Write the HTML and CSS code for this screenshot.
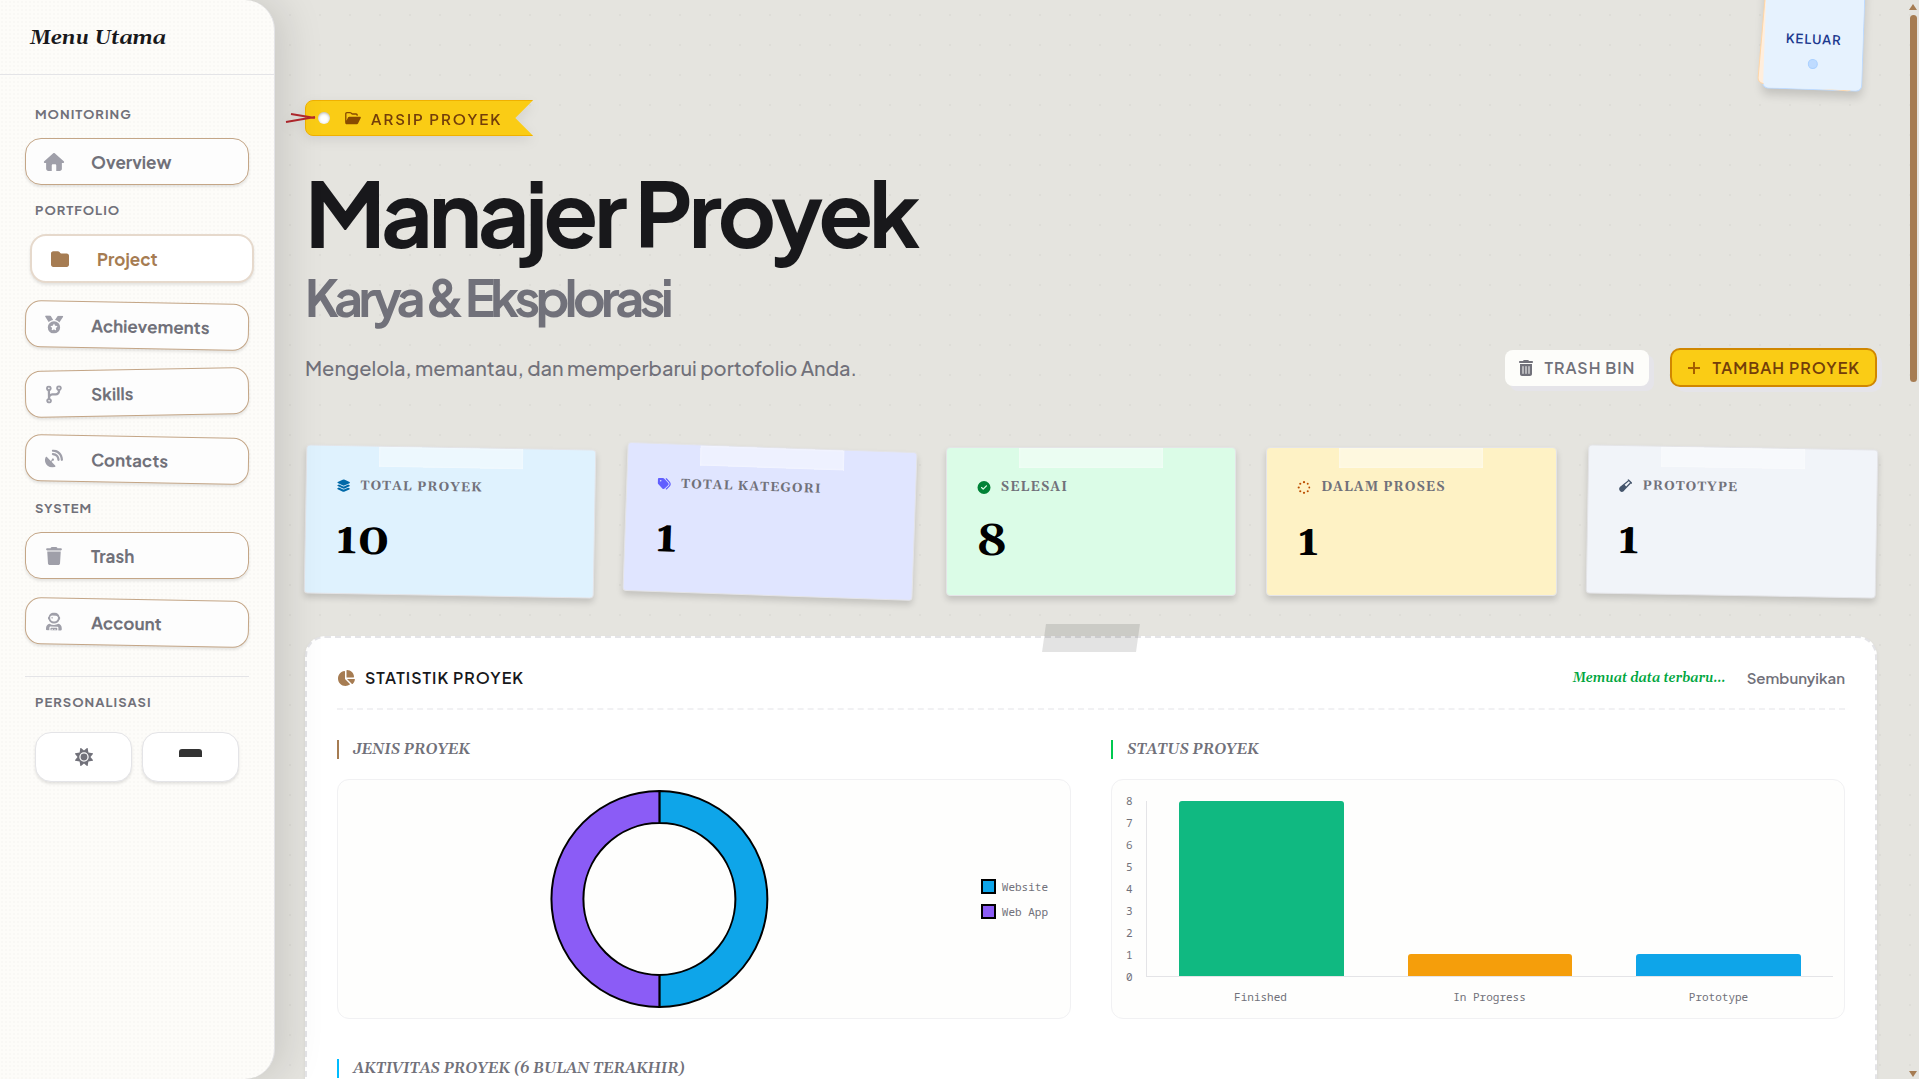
FILE: index.html
```html
<!DOCTYPE html>
<html lang="id">
<head>
    <meta charset="UTF-8">
    <meta name="viewport" content="width=device-width, initial-scale=1.0">
    <title>Manajer Proyek</title>
    <link rel="stylesheet" href="styles.css">
</head>
<body>
    <aside class="sidebar">
        <div class="sidebar-header">Menu Utama</div>
        <nav class="sidebar-nav">
            <p class="nav-label">Monitoring</p>
            <a href="#" class="nav-item">
                <svg class="nav-icon" viewBox="0 0 576 512"><path d="M575.8 255.5c0 18-15 32.1-32 32.1h-32l.7 160.2c0 35.3-28.7 64.2-64 64.2H352V352c0-17.7-14.3-32-32-32H256c-17.7 0-32 14.3-32 32V512H128c-35.3 0-64-28.7-64-64V287.6H32c-18 0-32-14-32-32.1c0-9 3-17 10-24L266.4 8c7-7 15-8 22-8s15 2 21 7L564.8 231.5c8 7 12 15 11 24z"/></svg>
                <span>Overview</span>
            </a>

            <p class="nav-label">Portfolio</p>
            <a href="#" class="nav-item active">
                <svg class="nav-icon" viewBox="0 0 512 512"><path d="M64 480H448c35.3 0 64-28.7 64-64V160c0-35.3-28.7-64-64-64H288c-10.1 0-19.6-4.7-25.6-12.8L243.2 57.6C231.1 41.5 212.1 32 192 32H64C28.7 32 0 60.7 0 96V416c0 35.3 28.7 64 64 64z"/></svg>
                <span>Project</span>
            </a>
            <a href="#" class="nav-item tilt-right">
                <svg class="nav-icon" viewBox="0 0 512 512"><path fill-rule="evenodd" d="M4.1 38.2C1.4 34.2 0 29.4 0 24.6C0 11 11 0 24.6 0H133.9c11.2 0 21.7 5.9 27.4 15.5l68.5 114.1c-48.2 6.1-91.3 28.6-123.4 61.9L4.1 38.2zm503.7 0L405.6 191.5c-32.1-33.3-75.2-55.8-123.4-61.9L350.7 15.5C356.5 5.9 366.9 0 378.1 0H487.4C501 0 512 11 512 24.6c0 4.8-1.4 9.6-4.1 13.6zM80 336a176 176 0 1 1 352 0A176 176 0 1 1 80 336zm184.4-94.9c-3.4-7-13.3-7-16.8 0l-22.4 45.4c-1.4 2.8-4 4.7-7 5.1L168 298.9c-7.7 1.1-10.7 10.5-5.2 16l36.3 35.4c2.2 2.2 3.2 5.2 2.7 8.3l-8.6 49.9c-1.3 7.6 6.7 13.5 13.6 9.9l44.8-23.6c2.7-1.4 6-1.4 8.7 0l44.8 23.6c6.9 3.6 14.9-2.2 13.6-9.9l-8.6-49.9c-.5-3 .5-6.1 2.7-8.3l36.3-35.4c5.6-5.4 2.5-14.8-5.2-16l-50.1-7.3c-3-.4-5.7-2.4-7-5.1l-22.4-45.4z"/></svg>
                <span>Achievements</span>
            </a>
            <a href="#" class="nav-item tilt-left">
                <svg class="nav-icon" viewBox="0 0 448 512"><path fill-rule="evenodd" d="M80 104a24 24 0 1 0 0-48 24 24 0 1 0 0 48zm80-24c0 32.8-19.7 61-48 73.3v87.8c18.8-10.9 40.7-17.1 64-17.1h96c35.3 0 64-28.7 64-64v-6.7C307.7 141 288 112.8 288 80c0-44.2 35.8-80 80-80s80 35.8 80 80c0 32.8-19.7 61-48 73.3V160c0 70.7-57.3 128-128 128H176c-35.3 0-64 28.7-64 64v6.7c28.3 12.3 48 40.5 48 73.3c0 44.2-35.8 80-80 80s-80-35.8-80-80c0-32.8 19.7-61 48-73.3V153.3C19.7 141 0 112.8 0 80C0 35.8 35.8 0 80 0s80 35.8 80 80zm232 0a24 24 0 1 0 -48 0 24 24 0 1 0 48 0zM80 456a24 24 0 1 0 0-48 24 24 0 1 0 0 48z"/></svg>
                <span>Skills</span>
            </a>
            <a href="#" class="nav-item tilt-right">
                <svg class="nav-icon" viewBox="0 0 512 512"><path d="M192 32c0-17.7 14.3-32 32-32C383.1 0 512 128.9 512 288c0 17.7-14.3 32-32 32s-32-14.3-32-32C448 164.3 347.7 64 224 64c-17.7 0-32-14.3-32-32zM60.6 220.6L164.7 324.7l28.4-28.4c-.7-2.6-1.1-5.4-1.1-8.3c0-17.7 14.3-32 32-32s32 14.3 32 32s-14.3 32-32 32c-2.9 0-5.6-.4-8.3-1.1l-28.4 28.4L291.4 451.4c14.5 14.5 11.8 38.8-7.3 46.3C260.5 506.9 234.9 512 208 512C93.1 512 0 418.9 0 304c0-26.9 5.1-52.5 14.4-76.1c7.5-19 31.8-21.8 46.3-7.3zM224 96c106 0 192 86 192 192c0 17.7-14.3 32-32 32s-32-14.3-32-32c0-70.7-57.3-128-128-128c-17.7 0-32-14.3-32-32s14.3-32 32-32z"/></svg>
                <span>Contacts</span>
            </a>

            <p class="nav-label">System</p>
            <a href="#" class="nav-item">
                <svg class="nav-icon" viewBox="0 0 448 512"><path d="M135.2 17.7L128 32H32C14.3 32 0 46.3 0 64S14.3 96 32 96H416c17.7 0 32-14.3 32-32s-14.3-32-32-32H320l-7.2-14.3C307.4 6.8 296.3 0 284.2 0H163.8c-12.1 0-23.2 6.8-28.6 17.7zM416 128H32L53.2 467c1.6 25.3 22.6 45 47.9 45H346.9c25.3 0 46.3-19.7 47.9-45L416 128z"/></svg>
                <span>Trash</span>
            </a>
            <a href="#" class="nav-item tilt-right">
                <svg class="nav-icon" viewBox="0 0 448 512"><path fill-rule="evenodd" d="M224 0C146 0 81 50 70 119C59 121 52 130 52 141V179C52 190 60 200 71 201C83 265 145 314 224 314S365 265 377 201C388 200 396 190 396 179V141C396 130 389 121 378 119C367 50 302 0 224 0zM172 88H276C310 88 336 114 336 148C336 214 290 256 224 256S112 214 112 148C112 114 138 88 172 88z"/><path d="M168 118L178 140L200 150L178 160L168 182L158 160L136 150L158 140z"/><path fill-rule="evenodd" d="M98 318C134 340 178 352 224 352S314 340 350 318C406 332 448 380 448 440V480C448 498 434 512 416 512H352V432C352 414 338 400 320 400H128C110 400 96 414 96 432V512H32C14 512 0 498 0 480V440C0 380 42 332 98 318zM144 432H304C313 432 320 439 320 448V512H128V448C128 439 135 432 144 432zM176 464A16 16 0 1 0 176 496A16 16 0 1 0 176 464zM256 464A16 16 0 1 0 256 496A16 16 0 1 0 256 464z"/></svg>
                <span>Account</span>
            </a>

            <div class="nav-footer">
                <p class="nav-label">Personalisasi</p>
                <div class="toggles">
                    <button class="toggle" aria-label="Tema">
                        <svg class="icon-sun" viewBox="0 0 512 512"><path fill-rule="evenodd" d="M361 10L381 131L502 151C512 153 515 163 510 171L440 256L510 341C515 349 512 359 502 361L381 381L361 502C359 512 349 515 341 510L256 440L171 510C163 515 153 512 151 502L131 381L10 361C0 359-3 349 2 341L72 256L2 171C-3 163 0 153 10 151L131 131L151 10C153 0 163-3 171 2L256 72L341 2C349-3 359 0 361 10zM256 122A134 134 0 1 0 256 390A134 134 0 1 0 256 122zM256 158A98 98 0 1 1 256 354A98 98 0 1 1 256 158z"/></svg>
                    </button>
                    <button class="toggle" aria-label="Tampilan"><span class="flag"></span></button>
                </div>
            </div>
        </nav>
    </aside>

    <main class="main">
        <button class="logout"><span>Keluar</span><i class="logout-dot"></i></button>

        <header class="page-header">
            <div class="ribbon">
                <svg class="ribbon-string" viewBox="0 0 32 14"><path d="M1 11L30 6M6 3L30 7"/></svg>
                <div class="ribbon-body">
                    <i class="ribbon-hole"></i>
                    <svg class="ribbon-icon" viewBox="0 0 576 512"><path fill-rule="evenodd" d="M0 96C0 61 29 32 64 32H181C198 32 214 39 226 51L253 77C259 83 267 86 275 86H400C435 86 464 115 464 150V176H416V150C416 141 409 134 400 134H275C254 134 234 126 219 111L192 85C189 82 185 80 181 80H64C55 80 48 87 48 96V360L0 450zM150 208C133 208 117 217 109 232L12 430C3 452 14 480 40 480H430C447 480 463 471 472 456L571 258C582 236 566 208 540 208z"/></svg>
                    <span>Arsip Proyek</span>
                </div>
            </div>
            <h1 class="title">Manajer Proyek <span class="subtitle">Karya &amp; Eksplorasi</span></h1>
            <div class="header-row">
                <p class="lead">Mengelola, memantau, dan memperbarui portofolio Anda.</p>
                <div class="actions">
                    <button class="btn btn-trash">
                        <svg viewBox="0 0 448 512"><path fill-rule="evenodd" d="M135.2 17.7C140.6 6.8 151.7 0 163.8 0H284.2c12.1 0 23.2 6.8 28.6 17.7L320 32h96c17.7 0 32 14.3 32 32s-14.3 32-32 32H32C14.3 96 0 81.7 0 64S14.3 32 32 32h96l7.2-14.3zM32 128H416V448c0 35.3-28.7 64-64 64H96c-35.3 0-64-28.7-64-64V128zm96 64c-8.8 0-16 7.2-16 16V432c0 8.8 7.2 16 16 16s16-7.2 16-16V208c0-8.8-7.2-16-16-16zm96 0c-8.8 0-16 7.2-16 16V432c0 8.8 7.2 16 16 16s16-7.2 16-16V208c0-8.8-7.2-16-16-16zm96 0c-8.8 0-16 7.2-16 16V432c0 8.8 7.2 16 16 16s16-7.2 16-16V208c0-8.8-7.2-16-16-16z"/></svg>
                        Trash Bin
                    </button>
                    <button class="btn btn-add">
                        <svg class="icon-plus" viewBox="0 0 14 14"><path d="M7 1V13M1 7H13"/></svg>
                        Tambah Proyek
                    </button>
                </div>
            </div>
        </header>

        <section class="stats">
            <article class="stat stat-blue">
                <h3 class="stat-label">
                    <svg viewBox="0 0 576 512"><path d="M264.5 5.2c14.9-6.9 32.1-6.9 47 0l218.6 101c8.5 3.9 13.9 12.4 13.9 21.8s-5.4 17.9-13.9 21.8l-218.6 101c-14.9 6.9-32.1 6.9-47 0L45.9 149.8C37.4 145.8 32 137.3 32 128s5.4-17.9 13.9-21.8L264.5 5.2zM476.9 209.6l53.2 24.6c8.5 3.9 13.9 12.4 13.9 21.8s-5.4 17.9-13.9 21.8l-218.6 101c-14.9 6.9-32.1 6.9-47 0L45.9 277.8C37.4 273.8 32 265.3 32 256s5.4-17.9 13.9-21.8l53.2-24.6 152 70.2c23.4 10.8 50.4 10.8 73.8 0l152-70.2zm-152 198.2l152-70.2 53.2 24.6c8.5 3.9 13.9 12.4 13.9 21.8s-5.4 17.9-13.9 21.8l-218.6 101c-14.9 6.9-32.1 6.9-47 0L45.9 405.8C37.4 401.8 32 393.3 32 384s5.4-17.9 13.9-21.8l53.2-24.6 152 70.2c23.4 10.8 50.4 10.8 73.8 0z"/></svg>
                    Total Proyek
                </h3>
                <p class="stat-value">10</p>
            </article>
            <article class="stat stat-indigo">
                <h3 class="stat-label">
                    <svg viewBox="0 0 512 512"><path fill-rule="evenodd" d="M345 39.1L472.8 168.4c52.4 53 52.4 138.2 0 191.2L360.8 472.9c-9.3 9.4-24.5 9.5-33.9 .2s-9.5-24.5-.2-33.9L438.6 325.9c33.9-34.3 33.9-89.4 0-123.7L310.9 72.9c-9.3-9.4-9.2-24.6 .2-33.9s24.6-9.2 33.9 .2zM0 229.5V80C0 53.5 21.5 32 48 32H197.5c17 0 33.3 6.7 45.3 18.7l168 168c25 25 25 65.5 0 90.5L277.3 442.7c-25 25-65.5 25-90.5 0l-168-168C6.7 262.7 0 246.5 0 229.5zM144 144a32 32 0 1 0 -64 0 32 32 0 1 0 64 0z"/></svg>
                    Total Kategori
                </h3>
                <p class="stat-value">1</p>
            </article>
            <article class="stat stat-green">
                <h3 class="stat-label">
                    <svg viewBox="0 0 512 512"><path fill-rule="evenodd" d="M256 512A256 256 0 1 0 256 0a256 256 0 1 0 0 512zM369 209L241 337c-9.4 9.4-24.6 9.4-33.9 0l-64-64c-9.4-9.4-9.4-24.6 0-33.9s24.6-9.4 33.9 0l47 47L335 175c9.4-9.4 24.6-9.4 33.9 0s9.4 24.6 0 33.9z"/></svg>
                    Selesai
                </h3>
                <p class="stat-value">8</p>
            </article>
            <article class="stat stat-yellow">
                <h3 class="stat-label">
                    <svg viewBox="0 0 512 512"><circle cx="256" cy="48" r="44"/><circle cx="403" cy="109" r="38"/><circle cx="464" cy="256" r="36"/><circle cx="403" cy="403" r="40"/><circle cx="256" cy="464" r="44"/><circle cx="109" cy="403" r="42"/><circle cx="48" cy="256" r="42"/><circle cx="109" cy="109" r="42"/></svg>
                    Dalam Proses
                </h3>
                <p class="stat-value">1</p>
            </article>
            <article class="stat stat-slate">
                <h3 class="stat-label">
                    <svg viewBox="0 0 512 512"><path fill-rule="evenodd" d="M343 7C355-3 371-2 382 9L503 130C514 141 514 158 503 169C492 180 475 180 464 169L213 441C170 520 90 522 40 472C-10 422-8 342 40 299L343 48C332 37 332 18 343 7zM382 86L217 224L277 289L425 129z"/></svg>
                    Prototype
                </h3>
                <p class="stat-value">1</p>
            </article>
        </section>

        <section class="panel">
            <header class="panel-header">
                <h2 class="panel-title">
                    <svg viewBox="0 0 576 512"><path d="M304 240V16.6c0-9 7-16.6 16-16.6C443.7 0 544 100.3 544 224c0 9-7.6 16-16.6 16H304zM32 272C32 150.7 122.1 50.3 239 34.3c9.2-1.3 17 6.1 17 15.4V288L412.5 444.5c6.7 6.7 6.2 17.7-1.5 23.1C371.8 495.6 323.8 512 272 512C139.5 512 32 404.6 32 272zm526.4 16c9.3 0 16.6 7.8 15.4 17c-7.7 55.9-34.6 105.6-73.9 142.3c-6 5.6-15.4 5.2-21.2-.7L320 288H558.4z"/></svg>
                    Statistik Proyek
                </h2>
                <div class="panel-tools">
                    <span class="status-text">Memuat data terbaru...</span>
                    <button class="link-btn">Sembunyikan</button>
                </div>
            </header>

            <div class="charts">
                <div class="chart-block">
                    <h3 class="chart-title brown">Jenis Proyek</h3>
                    <div class="chart-card donut-card">
                        <svg class="donut" viewBox="0 0 220 220">
                            <path class="fill-sky" d="M110 2A108 108 0 0 1 110 218V186A76 76 0 0 0 110 34Z"/>
                            <path class="fill-violet" d="M110 218A108 108 0 0 1 110 2V34A76 76 0 0 0 110 186Z"/>
                        </svg>
                        <ul class="legend">
                            <li><i class="swatch sky"></i>Website</li>
                            <li><i class="swatch violet"></i>Web App</li>
                        </ul>
                    </div>
                </div>
                <div class="chart-block">
                    <h3 class="chart-title green">Status Proyek</h3>
                    <div class="chart-card bar-card">
                        <div class="ticks">
                            <span>8</span><span>7</span><span>6</span><span>5</span><span>4</span><span>3</span><span>2</span><span>1</span><span>0</span>
                        </div>
                        <div class="plot-area">
                            <div class="plot">
                                <div class="col"><div class="bar emerald" style="height: 100%"></div></div>
                                <div class="col"><div class="bar amber" style="height: 12.5%"></div></div>
                                <div class="col"><div class="bar sky" style="height: 12.5%"></div></div>
                            </div>
                            <div class="plot-labels"><span>Finished</span><span>In Progress</span><span>Prototype</span></div>
                        </div>
                    </div>
                </div>
                <div class="chart-block wide">
                    <h3 class="chart-title cyan">Aktivitas Proyek (6 Bulan Terakhir)</h3>
                    <div class="chart-card"></div>
                </div>
            </div>
        </section>
    </main>

    <div class="scrollbar" aria-hidden="true">
        <i class="arrow up"></i>
        <i class="thumb"></i>
        <i class="arrow down"></i>
    </div>
</body>
</html>
```
FILE: styles.css
```css
* {
    box-sizing: border-box;
    margin: 0;
    padding: 0;
}

body {
    display: flex;
    height: 100vh;
    overflow: hidden;
    font-family: "Plus Jakarta Sans", Inter, sans-serif;
    color: #18181b;
    background-color: #e5e4df;
    background-image: radial-gradient(rgba(0, 0, 0, 0.03) 1px, transparent 1px);
    background-size: 30px 30px;
    background-position: 5px 0;
}

button {
    font-family: inherit;
    cursor: pointer;
    border: none;
    background: none;
}

svg {
    fill: currentColor;
    flex-shrink: 0;
}

/* sidebar */
.sidebar {
    position: relative;
    z-index: 10;
    flex: 0 0 275px;
    border-right: 1px solid #e4e4e7;
    border-radius: 0 30px 30px 0;
    background-color: #fdfcf9;
    background-image: radial-gradient(rgba(0, 0, 0, 0.015) 1px, transparent 1px);
    background-size: 4px 4px;
    box-shadow: 10px 0 40px rgba(0, 0, 0, 0.12);
}

.sidebar-header {
    padding: 25px 30px 23px;
    border-bottom: 1px solid #e4e4e7;
    font: italic 700 20px/26px Gelasio, "Liberation Serif", serif;
}

.sidebar-nav {
    padding: 29px 25px;
}

.nav-label {
    padding: 0 10px;
    margin: 15px 0 14px;
    font-size: 13px;
    line-height: 20px;
    font-weight: 700;
    letter-spacing: 1px;
    text-transform: uppercase;
    color: #71717a;
}

.nav-label:first-child {
    margin-top: 0;
}

.nav-item {
    display: flex;
    align-items: center;
    gap: 26px;
    height: 47px;
    padding: 0 17px;
    border: 1px solid #c4a687;
    border-radius: 16px;
    background: #fdfdfd;
    box-shadow: 0 2px 3px rgba(0, 0, 0, 0.1);
    font-size: 17px;
    font-weight: 700;
    color: #71717a;
    text-decoration: none;
}

.nav-item + .nav-item {
    margin-top: 20px;
}

.nav-item.active {
    height: 49px;
    margin-bottom: -1px;
    border: 2px solid #e6d9cc;
    background: #fff;
    color: #a67c52;
    transform: translateX(5px);
}

.nav-icon {
    width: 22px;
    height: 18px;
    color: #9f9fa9;
}

.active .nav-icon {
    color: #a67c52;
}

.tilt-right {
    transform: rotate(1deg);
}

.tilt-left {
    transform: rotate(-1deg);
}

.nav-footer {
    margin-top: 30px;
    border-top: 1px solid #e4e4e7;
}

.nav-footer .nav-label {
    margin: 15px 0 20px;
}

.toggles {
    display: flex;
    gap: 10px;
    padding: 0 10px;
}

.toggle {
    display: flex;
    flex: 1;
    justify-content: center;
    align-items: center;
    height: 50px;
    border: 1px solid #e4e4e7;
    border-radius: 16px;
    background: #fff;
    box-shadow: 0 2px 3px rgba(0, 0, 0, 0.1);
}

.icon-sun {
    width: 18px;
    height: 18px;
    color: #71717a;
}

.flag {
    width: 23px;
    height: 8px;
    margin-bottom: 8px;
    border-radius: 3px 3px 0 0;
    background: #333;
}

/* main column */
.main {
    position: relative;
    flex: 1;
    min-width: 0;
    height: 100vh;
    overflow: hidden;
    padding: 100px 30px 30px;
}

.logout {
    position: absolute;
    top: -30px;
    right: 43px;
    display: flex;
    flex-direction: column;
    align-items: center;
    justify-content: flex-end;
    gap: 10px;
    width: 100px;
    height: 120px;
    padding-bottom: 20px;
    border: 1px solid #bedbff;
    border-radius: 6px;
    background: #e6f2fe;
    box-shadow: 0 6px 10px rgba(0, 0, 0, 0.15);
    font-size: 13px;
    line-height: 20px;
    font-weight: 600;
    letter-spacing: 1px;
    text-transform: uppercase;
    color: #1c398e;
    transform: rotate(2deg);
}

/* second sheet under the logout note */
.logout::before {
    content: "";
    position: absolute;
    z-index: -2;
    inset: 0 5px 1px -3px;
    border: 1px solid #ffd6a7;
    border-radius: 6px;
    background: #ffeedd;
    transform: rotate(3deg);
}

.logout::after {
    content: "";
    position: absolute;
    z-index: -1;
    inset: 0;
    border-radius: 6px;
    background: #e6f2fe;
}

.logout-dot {
    width: 10px;
    height: 10px;
    border: 1px solid #a9d0ff;
    border-radius: 50%;
    background: #bedbff;
}

.ribbon {
    position: relative;
    display: inline-flex;
    filter: drop-shadow(0 4px 6px rgba(0, 0, 0, 0.08));
}

.ribbon-body {
    display: flex;
    align-items: center;
    height: 36px;
    padding: 0 30px 0 12px;
    border: 1px solid #f0b100;
    border-radius: 8px 0 0 8px;
    background: #facc15;
    clip-path: polygon(0 0, 100% 0, calc(100% - 18px) 50%, 100% 100%, 0 100%);
    font-size: 15px;
    font-weight: 600;
    letter-spacing: 2px;
    text-transform: uppercase;
    color: #733e0a;
}

.ribbon-hole {
    width: 12px;
    height: 12px;
    border-radius: 50%;
    background: #fff;
    box-shadow: inset 0 1px 3px rgba(0, 0, 0, 0.3);
}

.ribbon-icon {
    width: 16px;
    height: 14px;
    margin: 0 10px 0 15px;
    color: #894b00;
}

.ribbon-string {
    position: absolute;
    z-index: 1;
    left: -20px;
    top: 11px;
    width: 32px;
    height: 14px;
    fill: none;
    stroke: #b3282d;
    stroke-width: 2;
}

.title {
    margin-top: 28px;
    font-size: 90px;
    line-height: 96px;
    font-weight: 700;
    letter-spacing: -0.05em;
}

.subtitle {
    display: block;
    margin-top: 10px;
    font-size: 50px;
    line-height: 53px;
    color: #71717a;
}

.header-row {
    display: flex;
    justify-content: space-between;
    align-items: center;
    margin-top: 25px;
}

.lead {
    font-size: 20px;
    line-height: 28px;
    font-weight: 500;
    color: #71717a;
}

.actions {
    display: flex;
    align-items: center;
    gap: 21px;
}

.btn {
    display: flex;
    align-items: center;
    gap: 11px;
    height: 36px;
    padding: 0 14px;
    border-radius: 8px;
    box-shadow: 5px 5px 0 #e5e4e9;
    font-size: 16px;
    font-weight: 600;
    letter-spacing: 1px;
    text-transform: uppercase;
}

.btn svg {
    width: 14px;
    height: 16px;
}

.btn-trash {
    background: #fdfdfa;
    color: #71717a;
}

.btn-add {
    height: 39px;
    padding: 0 15px;
    border: 2px solid #d08700;
    border-radius: 10px;
    background: #facc15;
    color: #733e0a;
}

.btn .icon-plus {
    fill: none;
    stroke: #a65f00;
    stroke-width: 2;
}

/* stat cards */
.stats {
    display: grid;
    grid-template-columns: repeat(5, 1fr);
    gap: 30px;
    margin-top: 60px;
}

.stat {
    position: relative;
    height: 149px;
    padding: 27px 30px 0;
    border: 1px solid #e4e4e7;
    border-radius: 4px;
    box-shadow: 0 4px 6px rgba(0, 0, 0, 0.15);
}

/* strip of tape along the top edge */
.stat::before {
    content: "";
    position: absolute;
    top: 0;
    left: 25%;
    width: 50%;
    height: 20px;
    background: rgba(255, 255, 255, 0.45);
    box-shadow: inset 0 0 3px rgba(255, 255, 255, 0.6);
}

.stat-label {
    display: flex;
    align-items: center;
    gap: 10px;
    font: 700 13px/24px Gelasio, "Liberation Serif", serif;
    letter-spacing: 1px;
    text-transform: uppercase;
    color: #71717a;
}

.stat-label svg {
    width: 14px;
    height: 13px;
}

.stat-value {
    margin-top: 16px;
    font: 700 45px/54px Gelasio, "Liberation Serif", serif;
    color: #000;
}

.stat-blue { background: #dff2fe; transform: rotate(1deg); }
.stat-blue svg { color: #0069a8; }
.stat-indigo { background: #e0e5ff; transform: rotate(2deg); }
.stat-indigo svg { color: #615fff; }
.stat-green { background: #dbfce7; }
.stat-green svg { color: #008236; }
.stat-yellow { background: #fef2c5; }
.stat-yellow svg { color: #bb4d00; }
.stat-slate { background: #f1f4f9; transform: rotate(1deg); }
.stat-slate svg { color: #45556c; }

/* statistics panel */
.panel {
    position: relative;
    margin-top: 40px;
    padding: 24px 30px 30px;
    border: 2px dashed #e4e4e7;
    border-radius: 20px;
    background: #fff;
    box-shadow: 0 2px 4px rgba(0, 0, 0, 0.06);
}

.panel::before {
    content: "";
    position: absolute;
    top: -14px;
    left: 50%;
    width: 94px;
    height: 28px;
    background: rgba(0, 0, 0, 0.11);
    transform: translateX(-50%) skewX(-8deg);
}

.panel-header {
    display: flex;
    justify-content: space-between;
    align-items: center;
    padding-bottom: 14px;
    border-bottom: 2px dashed #f1f1f3;
}

.panel-title {
    display: flex;
    align-items: center;
    gap: 10px;
    font-size: 16px;
    line-height: 32px;
    font-weight: 600;
    letter-spacing: 1px;
    text-transform: uppercase;
}

.panel-title svg {
    width: 18px;
    height: 16px;
    color: #a67c52;
}

.panel-tools {
    display: flex;
    align-items: center;
    gap: 21px;
}

.status-text {
    font: italic 600 13px/20px Gelasio, "Liberation Serif", serif;
    color: #00a63e;
}

.link-btn {
    font-size: 15px;
    line-height: 20px;
    font-weight: 600;
    color: #71717a;
}

.charts {
    display: grid;
    grid-template-columns: 1fr 1fr;
    gap: 40px;
    margin-top: 30px;
}

.wide {
    grid-column: span 2;
}

.chart-title {
    margin-bottom: 20px;
    padding-left: 14px;
    border-left: 2px solid;
    font: italic 600 15px/19px Gelasio, "Liberation Serif", serif;
    text-transform: uppercase;
    color: #71717a;
}

.chart-title.brown { border-color: #a67c52; }
.chart-title.green { border-color: #00c950; }
.chart-title.cyan { border-color: #00bcff; }

.chart-card {
    display: flex;
    height: 240px;
    border: 1px solid #f1f1f3;
    border-radius: 12px;
    background: #fefefd;
    font: 11px/16px "Noto Sans Mono", "DejaVu Sans Mono", monospace;
    color: #71717a;
}

.donut-card {
    align-items: center;
    padding-right: 22px;
}

.donut {
    flex: 1;
    height: 220px;
    stroke: #000;
    stroke-width: 2;
}

.fill-sky { fill: #0ea5e9; }
.fill-violet { fill: #8b5cf6; }

.legend {
    list-style: none;
}

.legend li {
    display: flex;
    align-items: center;
    gap: 6px;
    height: 25px;
}

.swatch {
    width: 15px;
    height: 15px;
    border: 2px solid #000;
}

.sky { background: #0ea5e9; }
.violet { background: #8b5cf6; }
.emerald { background: #10b981; }
.amber { background: #f59e0b; }

.bar-card {
    padding: 10px 11px 0 14px;
}

.ticks {
    display: flex;
    flex-direction: column;
    width: 20px;
}

.ticks span {
    line-height: 22px;
}

.plot-area {
    flex: 1;
}

.plot {
    display: flex;
    height: 176px;
    margin-top: 11px;
    border-left: 1px solid #e4e4e7;
    border-bottom: 1px solid #e4e4e7;
}

.col {
    display: flex;
    flex: 1;
    align-items: flex-end;
    justify-content: center;
}

.bar {
    width: 72%;
    border-radius: 3px 3px 0 0;
}

.plot-labels {
    display: flex;
    margin-top: 12px;
}

.plot-labels span {
    flex: 1;
    text-align: center;
}

/* scrollbar rail */
.scrollbar {
    display: flex;
    flex-direction: column;
    align-items: center;
    flex: 0 0 12px;
    padding: 4px 0 2px;
}

.thumb {
    width: 7px;
    height: 34vh;
    margin-top: 5px;
    border-radius: 4px;
    background: #a67c52;
}

.arrow {
    border: 4px solid transparent;
}

.up {
    border-top: none;
    border-bottom: 6px solid #a67c52;
}

.down {
    margin-top: auto;
    border-bottom: none;
    border-top: 6px solid #a67c52;
}
```
